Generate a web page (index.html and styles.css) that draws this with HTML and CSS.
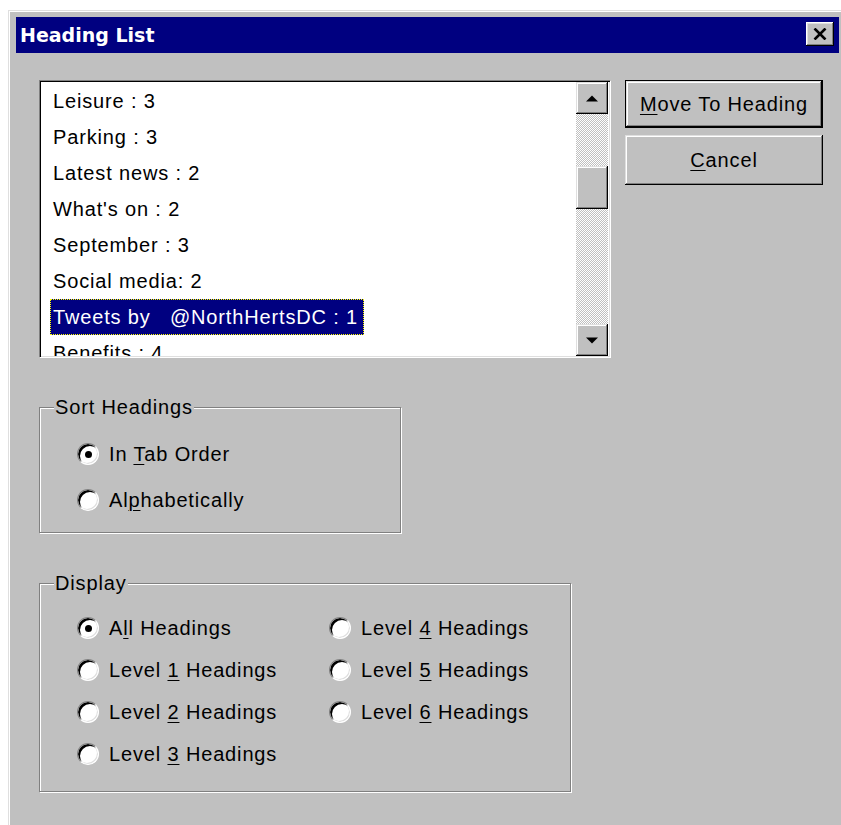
FILE: index.html
```html
<!DOCTYPE html>
<html lang="en">
<head>
<meta charset="utf-8">
<title>Heading List</title>
<link rel="stylesheet" href="styles.css">
</head>
<body>
<div class="window">
  <div class="titlebar">
    <span class="title">Heading List</span>
    <button class="close" type="button" aria-label="Close">
      <svg width="14" height="12" viewBox="0 0 14 12"><path d="M1.5 0.5 L12.5 11.5 M12.5 0.5 L1.5 11.5" stroke="#000" stroke-width="2.6" fill="none"/></svg>
    </button>
  </div>
  <div class="dialog-body">
    <div class="main">
      <div class="listbox">
        <ul class="list">
          <li><span>Leisure : 3</span></li>
          <li><span>Parking : 3</span></li>
          <li><span>Latest news : 2</span></li>
          <li><span>What's on : 2</span></li>
          <li><span>September : 3</span></li>
          <li><span>Social media: 2</span></li>
          <li class="selected"><span>Tweets by&nbsp;&nbsp; @NorthHertsDC : 1</span></li>
          <li><span>Benefits : 4</span></li>
        </ul>
        <div class="scrollbar">
          <div class="sb-btn"><svg width="12" height="7" viewBox="0 0 12 7"><polygon points="0,6.5 6,0.5 12,6.5" fill="#000"/></svg></div>
          <div class="sb-track"><div class="sb-thumb"></div></div>
          <div class="sb-btn"><svg width="12" height="7" viewBox="0 0 12 7"><polygon points="0,0.5 12,0.5 6,6.5" fill="#000"/></svg></div>
        </div>
      </div>

      <fieldset class="group sort">
        <legend>Sort Headings</legend>
        <div class="options">
          <label class="opt"><span class="radio checked"></span><span>In <u>T</u>ab Order</span></label>
          <label class="opt"><span class="radio"></span><span>Al<u>p</u>habetically</span></label>
        </div>
      </fieldset>

      <fieldset class="group display">
        <legend>Display</legend>
        <div class="options">
          <label class="opt"><span class="radio checked"></span><span>A<u>l</u>l Headings</span></label>
          <label class="opt"><span class="radio"></span><span>Level <u>1</u> Headings</span></label>
          <label class="opt"><span class="radio"></span><span>Level <u>2</u> Headings</span></label>
          <label class="opt"><span class="radio"></span><span>Level <u>3</u> Headings</span></label>
          <label class="opt"><span class="radio"></span><span>Level <u>4</u> Headings</span></label>
          <label class="opt"><span class="radio"></span><span>Level <u>5</u> Headings</span></label>
          <label class="opt"><span class="radio"></span><span>Level <u>6</u> Headings</span></label>
        </div>
      </fieldset>
    </div>

    <div class="actions">
      <button class="btn default" type="button"><u>M</u>ove To Heading</button>
      <button class="btn cancel" type="button"><u>C</u>ancel</button>
    </div>
  </div>
</div>
</body>
</html>
```

FILE: styles.css
```css
html, body {
  margin: 0;
  background: #fff;
  overflow: hidden;
}

body {
  font-family: "Liberation Sans", Arial, sans-serif;
  font-size: 20px;
  letter-spacing: 0.85px;
  word-spacing: 0;
  color: #000;
}

/* dialog frame */
.window {
  margin: 10px 0 0 8px;
  width: 900px;
  min-height: 830px;
  box-sizing: border-box;
  background: #c0c0c0;
  border-top: 1px solid #dfdfdf;
  border-left: 1px solid #dfdfdf;
  box-shadow: inset 1px 1px 0 #fff;
  padding: 6px 0 0 7px;
}

.titlebar {
  width: 823px;
  height: 36px;
  box-sizing: border-box;
  background: #000080;
  display: flex;
  align-items: center;
  justify-content: space-between;
  padding: 0 5px 0 4px;
}

.title {
  color: #fff;
  font-family: "DejaVu Sans", Verdana, sans-serif;
  font-weight: bold;
  font-size: 19px;
  letter-spacing: 0;
}

.close {
  width: 28px;
  height: 24px;
  margin-top: -3px;
  padding: 0;
  border: 0;
  background: #c0c0c0;
  display: flex;
  align-items: center;
  justify-content: center;
  box-shadow: inset -1px -1px 0 #000, inset 1px 1px 0 #fff,
              inset -2px -2px 0 #808080, inset 2px 2px 0 #dfdfdf;
}

.dialog-body {
  display: flex;
  align-items: flex-start;
  gap: 14px;
  padding: 27px 0 0 23px;
}

/* list with scrollbar */
.listbox {
  width: 572px;
  height: 278px;
  box-sizing: border-box;
  display: flex;
  padding: 1px 2px 1px 1px;
  background: #fff;
  border: 1px solid;
  border-color: #808080 #fff #fff #808080;
  box-shadow: inset 1px 1px 0 #000, inset -1px -1px 0 #dfdfdf;
}

.list {
  flex: 1;
  margin: 0;
  padding: 1px 0 0;
  list-style: none;
  overflow: hidden;
  background: #fff;
}

.list li {
  height: 36px;
  padding-left: 9px;
  white-space: pre;
}

.list li span {
  display: inline-block;
  height: 36px;
  line-height: 36px;
  padding: 0 3px;
  box-sizing: border-box;
}

.list li.selected span {
  background: #000080;
  color: #fff;
  padding-right: 6px;
  outline: 1px dotted #ffff00;
  outline-offset: -1px;
}

.scrollbar {
  width: 32px;
  display: flex;
  flex-direction: column;
}

.sb-btn,
.sb-thumb,
.btn {
  background: #c0c0c0;
  box-shadow: inset -1px -1px 0 #000, inset 1px 1px 0 #dfdfdf,
              inset -2px -2px 0 #808080, inset 2px 2px 0 #fff;
}

.sb-btn {
  height: 32px;
  flex: none;
  display: flex;
  align-items: center;
  justify-content: center;
}

.sb-track {
  flex: 1;
  background: repeating-conic-gradient(#c0c0c0 0 25%, #ffffff 0 50%) 0 0 / 2px 2px;
}

.sb-thumb {
  margin-top: 52px;
  height: 43px;
}

/* option groups */
.group {
  margin: 0;
  padding: 0;
  min-width: 0;
  box-sizing: border-box;
  border: 1px solid #808080;
  box-shadow: 1px 1px 0 #fff, inset 1px 1px 0 #fff;
}

.group legend {
  margin-left: 14px;
  padding: 0 1px;
  line-height: 24px;
  background: #c0c0c0;
}

.options {
  display: grid;
  padding: 12px 0 0 37px;
}

.sort {
  width: 362px;
  margin-top: 37px;
}

.sort .options {
  grid-template-rows: repeat(2, 46px);
  padding-bottom: 9px;
}

.display {
  width: 532px;
  margin-top: 38px;
}

.display .options {
  grid-template-rows: repeat(4, 42px);
  grid-template-columns: 252px auto;
  grid-auto-flow: column;
  padding-bottom: 16px;
}

.opt {
  display: flex;
  align-items: center;
  gap: 10px;
}

.radio {
  width: 22px;
  height: 22px;
  flex: none;
  box-sizing: border-box;
  border-radius: 50%;
  background: #fff;
  border: 1px solid;
  border-color: #808080 #fff #fff #808080;
  box-shadow: inset 2px 2px 0 #000, inset -1px -1px 0 #dfdfdf;
  display: flex;
  align-items: center;
  justify-content: center;
}

.radio.checked::after {
  content: "";
  width: 7px;
  height: 7px;
  border-radius: 50%;
  background: #000;
}

u {
  text-decoration-thickness: 1px;
  text-underline-offset: 3px;
}

/* command buttons */
.actions {
  display: flex;
  flex-direction: column;
  gap: 7px;
}

.btn {
  width: 198px;
  padding: 0;
  border: 0;
  font: inherit;
  letter-spacing: inherit;
  color: #000;
  text-align: center;
}

.btn.default {
  height: 48px;
  border: 1px solid #000;
}

.btn.cancel {
  height: 50px;
}
```
